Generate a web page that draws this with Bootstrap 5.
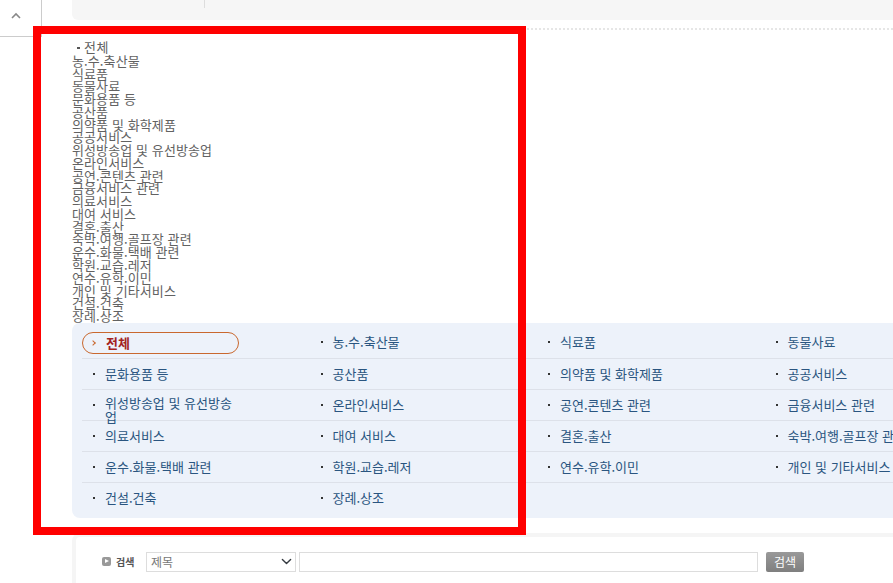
<!doctype html>
<html lang="ko"><head><meta charset="utf-8">
<link rel="stylesheet" href="https://cdn.jsdelivr.net/npm/bootstrap@5.3.0/dist/css/bootstrap.min.css">
<style>
html,body{height:583px;overflow:hidden;background:#fff}
body{font-family:"Noto Sans CJK KR","Liberation Sans",sans-serif;font-size:13px;color:#666}
.page-wrap{width:1100px;height:583px;position:relative}
.side-col{width:42px;flex:none}
.side-top{height:37px;border-right:1px solid #ccc;border-bottom:1px solid #ccc}
.main-col{margin-left:30px;width:1000px;flex:none}
.top-bar{height:20px;background:#f6f6f6;border-bottom-left-radius:6px}
.top-cell{width:133px;height:8px;border-right:1px solid #ddd}
.dot-line{height:0;margin-top:8px;border-top:2px dotted #e6e6e6}
.plain-list{list-style:none;margin:11px 0 0;padding:0;line-height:12.77px;color:#626262;letter-spacing:.1px}
.plain-list li:first-child{padding-left:12px;margin-bottom:1px;position:relative;letter-spacing:.5px}
.plain-list li:first-child::before{content:"";position:absolute;left:5px;top:6px;width:3px;height:2px;background:#555}
.cat-panel{margin-top:0;height:195px;width:1000px;background:#edf2fa;border-radius:8px;padding:4px 0 0 10px}
.cat-row{display:grid;grid-template-columns:repeat(4,227.5px);height:31px;border-top:1px solid #dde1e9}
.cat-row:first-child{border-top:0;height:31px}
.cat-item{color:#2a5580;line-height:29px;padding-left:23px;position:relative;font-size:13px;white-space:nowrap}
.cat-row:first-child .cat-item{line-height:30px}
.cat-item::before{content:"";position:absolute;left:11px;top:14px;width:2px;height:2px;background:#333}
.wrap-item{width:156px;white-space:normal;word-break:break-all;line-height:14px;padding-top:6px}
.cat-on{width:157px;height:22px;margin-top:5px;border:1px solid #c9682e;border-radius:11px;line-height:19px;color:#a3231f;font-weight:700;padding-left:23px;font-size:13px;position:relative}
.cat-on::before{content:"";position:absolute;left:8px;top:8px;width:4px;height:4px;border-top:1px solid #c9682e;border-right:1px solid #c9682e;transform:rotate(45deg)}
.search-box{margin-top:15px;height:60px;border-top:4px solid #f5f5f5;border-left:4px solid #f5f5f5;border-top-left-radius:8px;padding:15px 0 0 26px;gap:3px}
.search-lab{width:41px;font-size:10px;font-weight:700;color:#555;line-height:20px;gap:5px}
.play-ico{width:9px;height:9px;border-radius:2px;background:#999;position:relative;flex:none}
.play-ico::after{content:"";position:absolute;left:3px;top:2px;border-left:4px solid #fff;border-top:2.5px solid transparent;border-bottom:2.5px solid transparent}
.search-sel{width:150px;height:20px;border:1px solid #ddd;border-radius:0;background-position:right 3px center;background-size:11px;padding:0 0 0 4px;font:12px "Noto Sans CJK KR",sans-serif;color:#777;box-shadow:none}
.search-inp{width:459px;height:20px;border:1px solid #ddd;border-radius:0;padding:0}
.search-btn{width:38px;height:20px;margin-left:5px;padding:0;border:0;border-radius:2px;background:linear-gradient(#999,#7f7f7f);color:#fff;font-size:12px;line-height:20px}
.red-frame{position:absolute;left:33px;top:26px;width:493px;height:509px;border:8px solid #f00;pointer-events:none}
.top-arrow{position:absolute;left:11px;top:12px}
</style></head><body>
<div class="page-wrap d-flex">
<div class="side-col"><div class="side-top"></div></div>
<svg class="top-arrow" width="10" height="7" viewBox="0 0 10 7"><path d="M1 6L5 2L9 6" fill="none" stroke="#888" stroke-width="1.6"/></svg>
<div class="main-col" >
<div class="top-bar"><div class="top-cell"></div></div>
<div class="dot-line"></div>
<ul class="plain-list">
<li>전체</li><li>농.수.축산물</li><li>식료품</li><li>동물사료</li><li>문화용품 등</li><li>공산품</li><li>의약품 및 화학제품</li><li>공공서비스</li><li>위성방송업 및 유선방송업</li><li>온라인서비스</li><li>공연.콘텐츠 관련</li><li>금융서비스 관련</li><li>의료서비스</li><li>대여 서비스</li><li>결혼.출산</li><li>숙박.여행.골프장 관련</li><li>운수.화물.택배 관련</li><li>학원.교습.레저</li><li>연수.유학.이민</li><li>개인 및 기타서비스</li><li>건설.건축</li><li>장례.상조</li>
</ul>
<div class="cat-panel">
<div class="cat-row"><div><div class="cat-on">전체</div></div><div class="cat-item">농.수.축산물</div><div class="cat-item">식료품</div><div class="cat-item">동물사료</div></div>
<div class="cat-row"><div class="cat-item">문화용품 등</div><div class="cat-item">공산품</div><div class="cat-item">의약품 및 화학제품</div><div class="cat-item">공공서비스</div></div>
<div class="cat-row"><div class="cat-item wrap-item">위성방송업 및 유선방송업</div><div class="cat-item">온라인서비스</div><div class="cat-item">공연.콘텐츠 관련</div><div class="cat-item">금융서비스 관련</div></div>
<div class="cat-row"><div class="cat-item">의료서비스</div><div class="cat-item">대여 서비스</div><div class="cat-item">결혼.출산</div><div class="cat-item">숙박.여행.골프장 관련</div></div>
<div class="cat-row"><div class="cat-item">운수.화물.택배 관련</div><div class="cat-item">학원.교습.레저</div><div class="cat-item">연수.유학.이민</div><div class="cat-item">개인 및 기타서비스</div></div>
<div class="cat-row"><div class="cat-item">건설.건축</div><div class="cat-item">장례.상조</div><div></div><div></div></div>
</div>
<div class="search-box d-flex align-items-start">
<div class="search-lab d-flex align-items-center"><span class="play-ico"></span>검색</div>
<select class="form-select search-sel"><option>제목</option></select>
<input class="form-control search-inp" type="text">
<button class="btn search-btn" type="button">검색</button>
</div>
</div>
<div class="red-frame"></div>
</div>
<script src="https://cdn.jsdelivr.net/npm/bootstrap@5.3.0/dist/js/bootstrap.bundle.min.js"></script>
</body></html>
